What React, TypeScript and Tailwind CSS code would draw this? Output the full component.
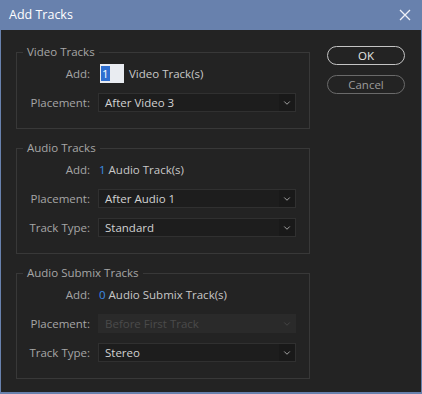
import { ChevronDown } from 'lucide-react';

const FONT = { fontFamily: '"Open Sans", "Noto Sans", sans-serif' };

type Row =
  | { kind: 'add'; value: string; unit: string; editable?: boolean }
  | { kind: 'select'; label: string; value: string; disabled?: boolean };

const GROUPS: { title: string; rows: Row[] }[] = [
  {
    title: 'Video Tracks',
    rows: [
      { kind: 'add', value: '1', unit: 'Video Track(s)', editable: true },
      { kind: 'select', label: 'Placement:', value: 'After Video 3' },
    ],
  },
  {
    title: 'Audio Tracks',
    rows: [
      { kind: 'add', value: '1', unit: 'Audio Track(s)' },
      { kind: 'select', label: 'Placement:', value: 'After Audio 1' },
      { kind: 'select', label: 'Track Type:', value: 'Standard' },
    ],
  },
  {
    title: 'Audio Submix Tracks',
    rows: [
      { kind: 'add', value: '0', unit: 'Audio Submix Track(s)' },
      { kind: 'select', label: 'Placement:', value: 'Before First Track', disabled: true },
      { kind: 'select', label: 'Track Type:', value: 'Stereo' },
    ],
  },
];

function Select({ value, disabled }: { value: string; disabled?: boolean }) {
  return (
    <div
      className={`flex h-[19px] w-[198px] items-center border ${
        disabled ? 'border-[#2a2a2a] bg-[#2a2a2a] text-[#4a4a4a]' : 'border-[#303030] bg-[#1d1d1d] text-[#d2d2d2]'
      }`}
    >
      <span className="flex-1 truncate pl-[6px]">{value}</span>
      <span
        className={`flex h-full w-[16px] items-center justify-center ${
          disabled ? 'text-[#4a4a4a]' : 'bg-[#191919] text-[#bdbdbd]'
        }`}
      >
        <ChevronDown className="h-[10px] w-[10px]" strokeWidth={2} />
      </span>
    </div>
  );
}

function GroupRow({ row }: { row: Row }) {
  return (
    <div className="flex h-[19px] items-center">
      <span className="w-[73px] shrink-0 text-right text-[#a6a6a6]">
        {row.kind === 'add' ? 'Add:' : row.label}
      </span>
      <div className="ml-[8px] flex items-center">
        {row.kind === 'add' ? (
          <>
            {row.editable ? (
              <span className="ml-[2px] flex h-[19px] w-[24px] items-center bg-[#e9ecf1] pl-[1px]">
                <span className="bg-[#2f6fd0] px-[1px] leading-[15px] text-white">{row.value}</span>
              </span>
            ) : (
              <span className="ml-[1px] text-[#3b8de6]">{row.value}</span>
            )}
            <span className={`${row.editable ? 'ml-[5px]' : 'ml-[3px]'} text-[#c8c8c8]`}>{row.unit}</span>
          </>
        ) : (
          <Select value={row.value} disabled={row.disabled} />
        )}
      </div>
    </div>
  );
}

export default function App() {
  return (
    <div
      className="flex h-[394px] w-[422px] flex-col border-x border-b-2 border-[#6881ad] bg-[#232323] text-[11.5px] leading-[16px]"
      style={FONT}
    >
      <div className="flex h-[30px] shrink-0 items-center justify-between bg-[#6881ad] pl-[8px] pr-[10px]">
        <span className="text-[12.5px] text-white">Add Tracks</span>
        <svg width="12" height="12" viewBox="0 0 12 12" className="text-[#eef1f7]">
          <path d="M1 1L11 11M11 1L1 11" stroke="currentColor" strokeWidth="1.3" />
        </svg>
      </div>

      <div className="flex gap-[17px] pl-[15px] pt-[14px]">
        <div className="flex w-[294px] flex-col gap-[11px]">
          {GROUPS.map((g) => (
            <fieldset key={g.title} className="border border-[#383838] px-0 pb-[16px]">
              <legend className="ml-[6px] px-[4px] text-[#a6a6a6]">{g.title}</legend>
              <div className="flex flex-col gap-[10px] pt-[4px]">
                {g.rows.map((r, i) => (
                  <GroupRow key={i} row={r} />
                ))}
              </div>
            </fieldset>
          ))}
        </div>

        <div className="flex flex-col gap-[10px] pt-[2px]">
          <button className="h-[19px] w-[78px] rounded-full border border-[#c4c4c4] text-[11.5px] leading-none text-[#e6e6e6]">
            OK
          </button>
          <button className="h-[19px] w-[78px] rounded-full border border-[#6a6a6a] text-[11.5px] leading-none text-[#9c9c9c]">
            Cancel
          </button>
        </div>
      </div>
    </div>
  );
}
